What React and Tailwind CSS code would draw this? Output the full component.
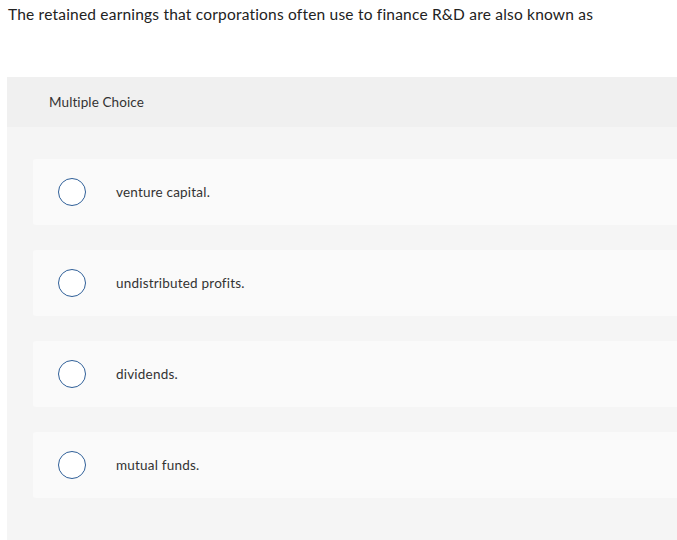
const options = [
  "venture capital.",
  "undistributed profits.",
  "dividends.",
  "mutual funds.",
];

function Radio() {
  return (
    <span className="block w-[28px] h-[28px] rounded-full border-[1.5px] border-[#2f5f98] bg-white shrink-0" />
  );
}

export default function App() {
  return (
    <div
      className="w-[677px] h-[540px] overflow-hidden bg-white text-[#333]"
      style={{ fontFamily: "Lato, 'Open Sans', sans-serif", fontVariantLigatures: "none" }}
    >
      <p className="pl-[8px] pt-[4px] text-[15.5px] leading-[20px] tracking-[0.2px] text-[#222]">
        The retained earnings that corporations often use to finance R&amp;D are also known as
      </p>

      <div className="ml-[7px] mt-[53px] bg-[#f5f5f5] h-[470px]">
        <div className="h-[50px] bg-[#f0f0f0] flex items-center pl-[42px] text-[13.5px] tracking-[0.1px] text-[#333]">
          Multiple Choice
        </div>

        <div className="pt-[32px] pl-[26px] flex flex-col gap-[25px]">
          {options.map((opt, i) => (
            <div
              key={i}
              className="h-[66px] bg-[#fafafa] rounded-l-[3px] flex items-center pl-[25px] -mr-[10px]"
            >
              <Radio />
              <span className="ml-[30px] text-[13.5px] tracking-[0.2px] text-[#333]">{opt}</span>
            </div>
          ))}
        </div>
      </div>
    </div>
  );
}
